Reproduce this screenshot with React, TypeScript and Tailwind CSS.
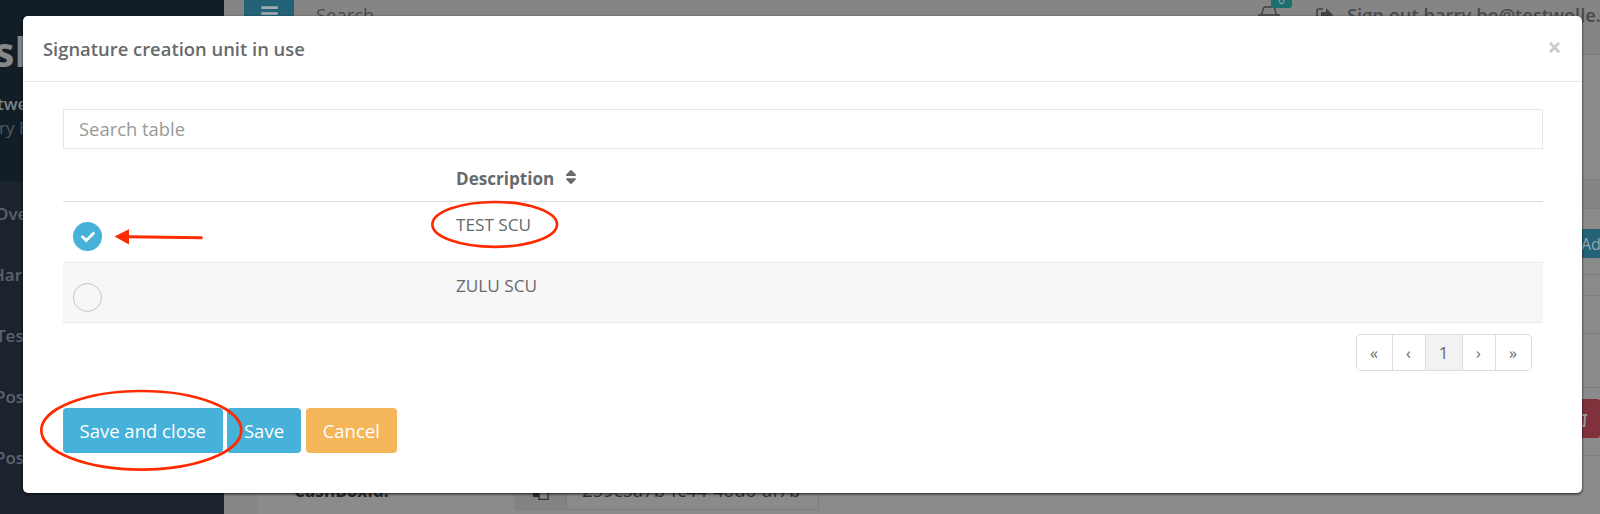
import React from "react";
import { FaBars, FaCheck, FaSort } from "react-icons/fa";

const sideItems = [
  { label: "Ove", shift: "-ml-[5px]" },
  { label: "Har", shift: "-ml-[8px]" },
  { label: "Tes", shift: "-ml-[4px]" },
  { label: "Pos", shift: "-ml-[5px]" },
  { label: "Pos", shift: "-ml-[5px]" },
];

function Sidebar() {
  return (
    <aside className="h-full w-[224px] shrink-0 overflow-hidden whitespace-nowrap bg-[#1b232e]">
      <div className="flex h-[181px] flex-col bg-[#121e27]">
        <div className="-ml-[6px] mt-[26px] h-[50px] text-[41px] font-bold leading-[50px] text-[#868889]">sk</div>
        <div className="-ml-[3px] mt-[16px] text-[17px] font-semibold leading-[24px] text-[#7d8286]">twe</div>
        <div className="-ml-[1px] text-[17px] leading-[24px] text-[#525b62]">ry B</div>
      </div>
      <nav className="flex flex-col pt-[2px]">
        {sideItems.map((item, i) => (
          <div key={i} className={`h-[61px] text-[17px] font-semibold leading-[61px] text-[#5c636c] ${item.shift}`}>
            {item.label}
          </div>
        ))}
      </nav>
    </aside>
  );
}

function TopBar() {
  return (
    <header className="flex h-[55px] shrink-0 items-start overflow-hidden whitespace-nowrap border-b border-[#7d7d7d] bg-[#858585] text-[#484a4b]">
      <div className="ml-[20px] flex h-[32px] w-[50px] shrink-0 justify-center bg-[#236277] pt-[4px] text-[19px] text-[#a3adb0]">
        <FaBars />
      </div>
      <div className="ml-[22px] w-[60px] shrink-0 text-[18.400px] leading-[29px]">Search</div>
      <svg className="ml-[882px] mt-[6px] h-[20px] w-[22px] shrink-0" viewBox="0 0 22 20" fill="none" stroke="#3f4142" strokeWidth="1.4">
        <path d="M1 9h20v10H1zM3.500 9l2-7q.3-1 1.500-1h8q1.200 0 1.500 1l2 7" />
      </svg>
      <div className="-ml-[9px] -mt-[6px] flex h-[14px] w-[21px] shrink-0 justify-center rounded-[3px] bg-[#1c6f70] text-[12px] leading-[11px] text-[#a0a0a0]">0</div>
      <svg className="ml-[24px] mt-[7px] h-[16px] w-[17px] shrink-0" viewBox="0 0 17 16">
        <path d="M7 2H3Q1 2 1 4v8q0 2 2 2h4" fill="none" stroke="#414344" strokeWidth="1.7" />
        <path d="M10 1l7 7-7 7v-4H5V5h5z" fill="#414344" />
      </svg>
      <div className="ml-[14px] text-[18.300px] font-semibold leading-[29px]">Sign out harry.bo@testwolle.</div>
    </header>
  );
}

function Page() {
  return (
    <div className="flex h-full min-w-0 flex-1 flex-col bg-[#868686]">
      <TopBar />
      <div className="ml-[33px] flex flex-1 flex-col bg-[#8b8b8b]">
        <div className="h-[125px] border-b border-[#7f7f7f]" />
        <div className="h-[29px] border-b border-[#7f7f7f] bg-[#858585]" />
        <div className="flex h-[66px] items-start justify-end border-b border-[#7d7d7d] pt-[20px]">
          <div className="h-[29px] w-[40px] overflow-hidden whitespace-nowrap bg-[#236277] pl-[21px] text-[16px] leading-[30px] text-[#9aa5a9]">Ad</div>
        </div>
        <div className="h-[21px] border-b border-[#7d7d7d]" />
        <div className="h-[38px] border-b border-[#7d7d7d]" />
        <div className="h-[54px] border-b border-[#7d7d7d]" />
        <div className="flex h-[68px] items-start justify-end border-b border-[#7d7d7d] pt-[11px]">
          <div className="flex h-[39px] w-[50px] items-center rounded-[3px] bg-[#80313b] pl-[26px] pt-[2px]">
            <svg className="h-[14px] w-[11px]" viewBox="0 0 11 14" fill="none" stroke="#a09a9b" strokeWidth="2">
              <path d="M0 2h11M9 2l-.7 11H0M5 4v7" />
            </svg>
          </div>
        </div>
        <div className="flex items-start pt-[15px]">
          <div className="ml-[37px] w-[220px] text-[17.200px] font-bold leading-[39px] text-[#27292a]">CashBoxId:</div>
          <div className="flex h-[40px] w-[52px] items-center justify-center rounded-l-[4px] bg-[#838383]">
            <svg className="h-[20px] w-[17px]" viewBox="0 0 17 20">
              <path d="M1 0h9v16H1z" fill="#2c2e2f" />
              <path d="M7 6h9v12.300H7z" fill="#8b8b8b" stroke="#2c2e2f" strokeWidth="1.300" />
            </svg>
          </div>
          <div className="h-[39px] w-[253px] whitespace-nowrap border border-[#7c7c7c] pl-[15px] text-[18.450px] leading-[36px] text-[#303233]">259c5a7b-fc44-40d6-af7b</div>
        </div>
      </div>
    </div>
  );
}

const pages = [
  { label: "«", style: "w-[35px] text-[16px]" },
  { label: "‹", style: "w-[33px] border-l text-[16px]" },
  { label: "1", style: "w-[37px] border-l bg-[#f2f2f2] text-[17px]" },
  { label: "›", style: "w-[33px] border-l text-[16px]" },
  { label: "»", style: "w-[36px] border-l text-[16px]" },
];

function Modal() {
  return (
    <section className="absolute left-[23px] top-[15.500px] flex h-[477px] w-[1559px] flex-col rounded-[5px] bg-white text-[#676a6c] shadow-[0_1px_3px_rgba(0,0,0,0.8)]">
      <div className="flex h-[66.500px] shrink-0 items-start justify-between border-b border-[#e8e8e8] pl-[20px] pr-[21px] pt-[18px]">
        <h4 className="text-[18.400px] font-semibold leading-[30px]">Signature creation unit in use</h4>
        <svg className="mt-[7.500px] h-[13px] w-[13px]" viewBox="0 0 14 14" stroke="#cccccc" strokeWidth="3">
          <path d="M2 2l10 10M12 2L2 12" />
        </svg>
      </div>
      <div className="flex flex-1 flex-col px-[39.500px] pt-[27px]">
        <div className="h-[40px] shrink-0 border border-[#e5e6e7] pl-[15.500px] text-[18.400px] leading-[38px] text-[#999999]">Search table</div>
        <div className="flex h-[53px] items-start border-b border-[#dddddd] pl-[393.500px] pt-[15px] text-[17.100px] font-bold leading-[30px]">
          Description
          <FaSort className="ml-[8px] mt-[4px] text-[18px]" />
        </div>
        <div className="flex h-[61px] items-start border-b border-[#e7eaec]">
          <div className="w-[393.500px] pl-[10.500px] pt-[20px]">
            <div className="flex h-[29px] w-[29px] items-center justify-center rounded-full bg-[#46b1d9] text-[14px] text-white"><FaCheck /></div>
          </div>
          <div className="pt-[8px] text-[17.200px] leading-[30px]">TEST SCU</div>
        </div>
        <div className="flex h-[60px] items-start border-b border-[#e7eaec] bg-[#f7f7f7]">
          <div className="w-[393.500px] pl-[10.500px] pt-[20px]">
            <div className="h-[29px] w-[29px] rounded-full border border-[#c8c5bc]" />
          </div>
          <div className="pt-[8px] text-[17.200px] leading-[30px]">ZULU SCU</div>
        </div>
        <div className="flex justify-end pr-[11px] pt-[11px]">
          <div className="flex h-[37px] overflow-hidden rounded-[5px] border border-[#dddddd]">
            {pages.map((p) => (
              <div key={p.label} className={`flex items-center justify-center border-[#dddddd] ${p.style}`}>{p.label}</div>
            ))}
          </div>
        </div>
        <div className="mt-[37px] flex items-start text-[18.500px] leading-[45px] text-white">
          <button className="h-[45px] w-[160.500px] rounded-[4px] bg-[#46b1d9]">Save and close</button>
          <button className="ml-[4px] h-[45px] w-[74px] rounded-[4px] bg-[#46b1d9]">Save</button>
          <button className="ml-[5px] h-[45px] w-[90.500px] rounded-[4px] bg-[#f5b65a]">Cancel</button>
        </div>
      </div>
    </section>
  );
}

function Marks() {
  return (
    <svg className="pointer-events-none absolute inset-0 h-[514px] w-[1600px]" viewBox="0 0 1600 514" fill="none" stroke="#ff2a00" strokeWidth="2.700">
      <ellipse cx="141.300" cy="430.300" rx="100" ry="39.300" />
      <ellipse cx="494.700" cy="224.400" rx="62.300" ry="22.400" />
      <path d="M128 236.800L202.500 237.700" strokeWidth="3" />
      <path d="M114.500 236.500L129 229.300V244.500z" fill="#ff2a00" stroke="none" />
    </svg>
  );
}

export default function App() {
  return (
    <main className="relative flex h-[514px] w-[1600px] overflow-hidden font-['Open_Sans',sans-serif]">
      <Sidebar />
      <Page />
      <Modal />
      <Marks />
    </main>
  );
}
